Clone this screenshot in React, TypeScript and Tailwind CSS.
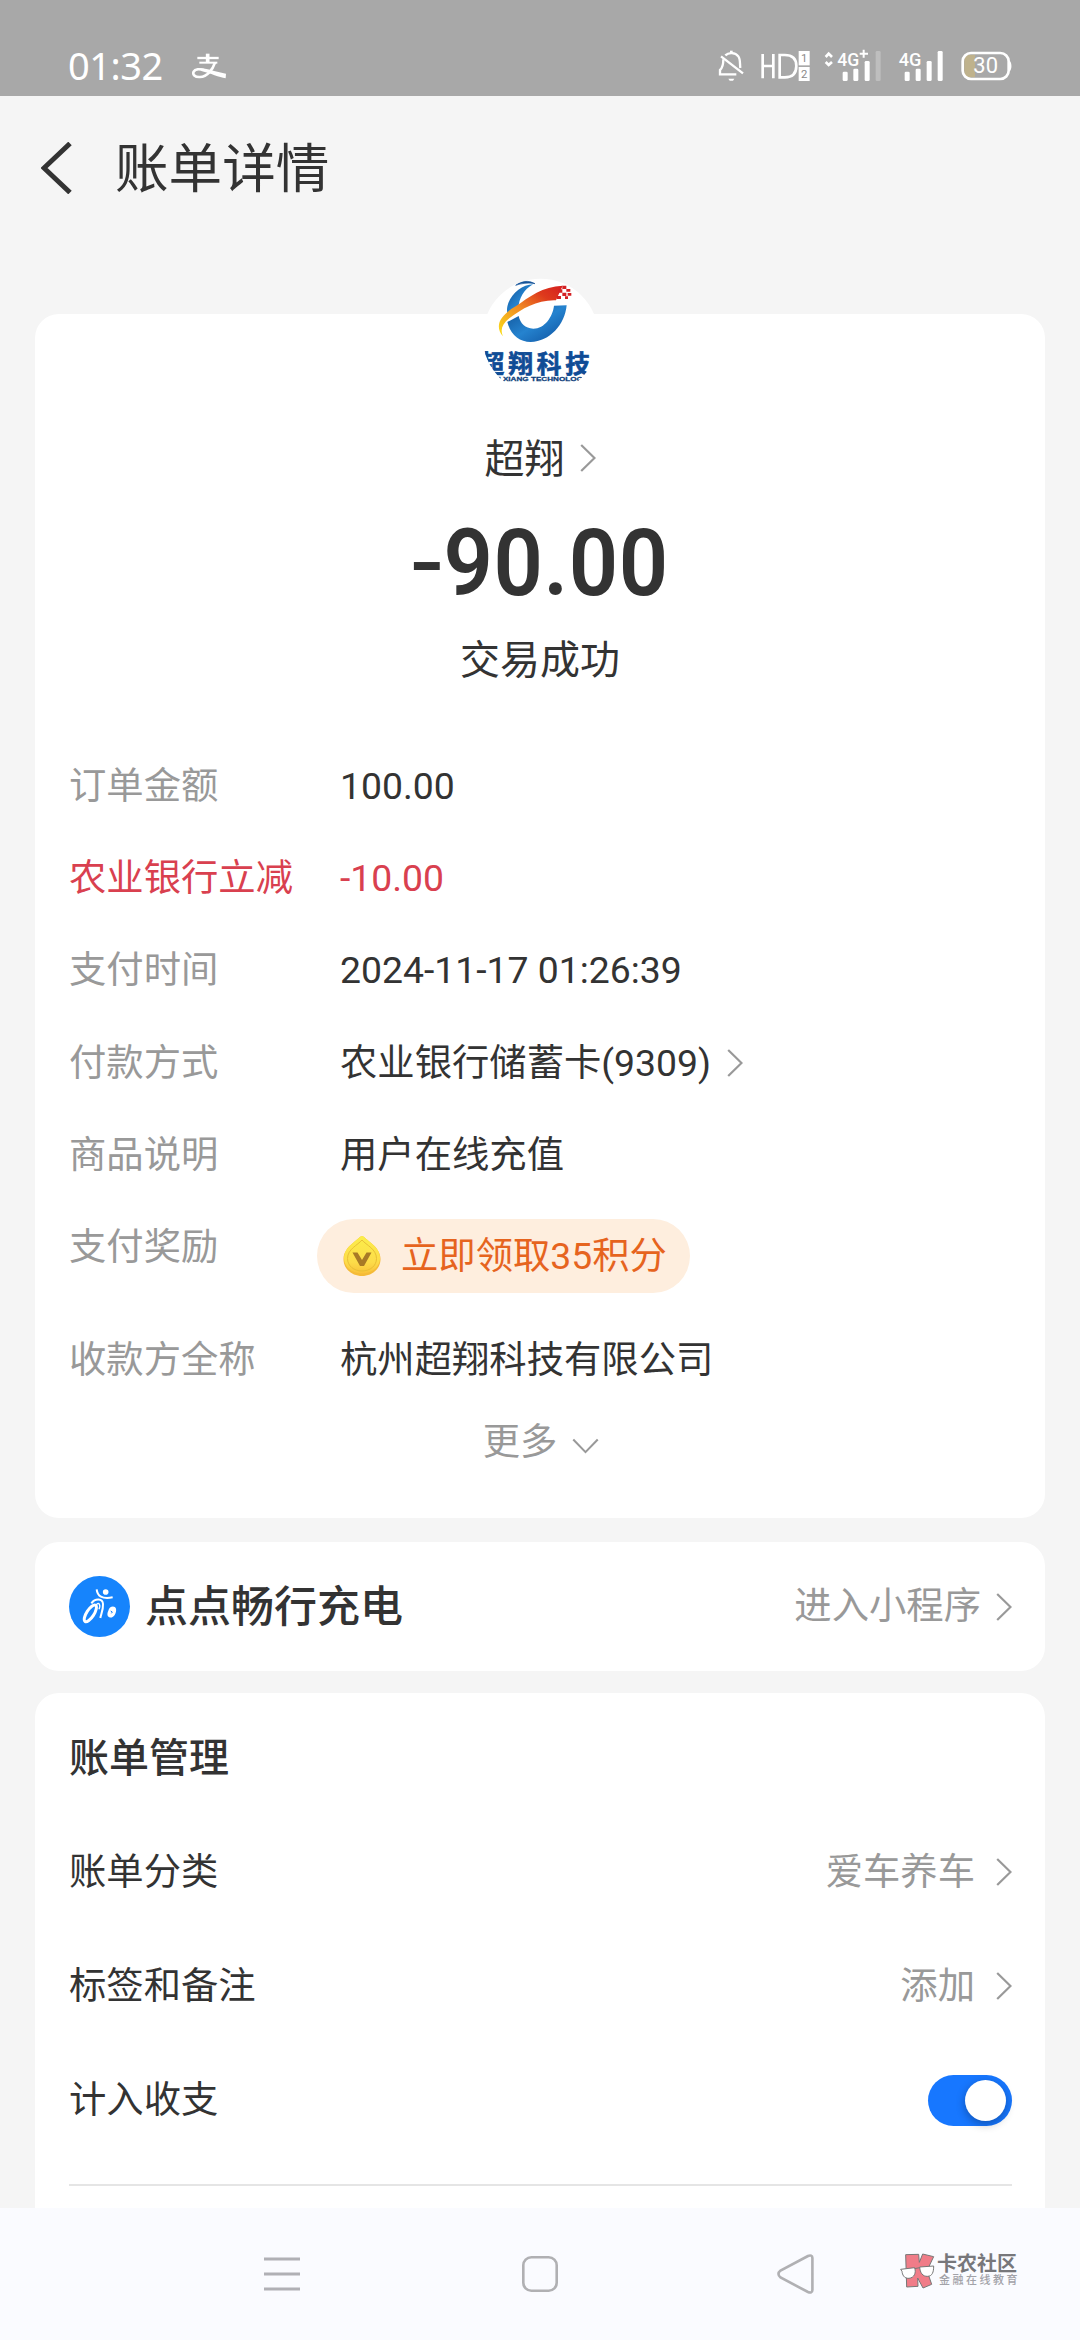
import type { ReactNode } from "react";

const details = [
  { label: "订单金额", value: "100.00" },
  { label: "农业银行立减", value: "-10.00", highlight: true },
  { label: "支付时间", value: "2024-11-17 01:26:39" },
  { label: "付款方式", value: "农业银行储蓄卡(9309)", link: true },
  { label: "商品说明", value: "用户在线充值" },
];

function ChevronRight({ className = "" }: { className?: string }) {
  return (
    <svg className={`shrink-0 ${className}`} width="16" height="28" viewBox="0 0 16 28" fill="none">
      <path d="M1.2 1 L14.5 14 L1.2 27" stroke="#999999" strokeWidth="2.2" />
    </svg>
  );
}

function StatusBar() {
  return (
    <div className="flex h-24 shrink-0 items-start bg-[#a8a8a8] pl-[68px] text-white">
      <span className="mt-[40px] w-[124px] font-['Noto_Sans'] text-[38px] leading-[50px] tracking-[-0.5px]">01:32</span>
      {/* Alipay notification */}
      <svg className="mt-[52px]" width="35" height="28" viewBox="574 96 105 84" fill="none" stroke="#fff">
        <path d="M590 114 H654" strokeWidth="7" />
        <path d="M621 101 V129" strokeWidth="11" />
        <path d="M596 128 H650" strokeWidth="6" />
        <path d="M643 128 C636 149 620 170 598 171 C582 172 575 163 579 155 C583 147 597 146 610 150" strokeWidth="8" />
        <path d="M598 145 C625 146 650 158 676 161 L675 175 C655 172 630 160 602 153 Z" fill="#fff" stroke="none" />
      </svg>

      <div className="ml-[491px] mt-[45px] flex">
        {/* Muted bell */}
        <svg width="27" height="37" viewBox="82 45 81 111" fill="none" stroke="#fff" strokeWidth="7">
          <path d="M122 62 V70" strokeWidth="8" />
          <path d="M104 76 C114 66 134 67 143 79 C150 88 147 103 149 114" />
          <path d="M98 88 C98 103 97 113 88 120 V133 H137" />
          <path d="M91 79 L157 130" />
          <path d="M113 146 H131 L127 152 H117 Z" fill="#fff" stroke="none" />
        </svg>
        {/* HD on both sims */}
        <svg className="ml-[15px]" width="51" height="37" viewBox="208 45 153 111" fill="none">
          <path d="M216 72 V145 M248 72 V145 M216 108 H248 M267 75 V142 H282 C310 142 317 126 317 108 C317 90 310 75 282 75 Z" stroke="#fff" strokeWidth="8" />
          <rect x="324" y="63" width="33" height="43" fill="#fff" />
          <rect x="324" y="111" width="33" height="42" fill="#fff" />
          <text x="340.5" y="97" textAnchor="middle" fontFamily="Roboto" fontSize="34" fill="#8a8a8a">1</text>
          <text x="340.5" y="145" textAnchor="middle" fontFamily="Roboto" fontSize="34" fill="#8a8a8a">2</text>
        </svg>
        <svg className="ml-[13px]" width="59" height="37" viewBox="400 45 177 111" fill="none">
          <path d="M405 81 L414 71 L424 81 M405 96 L414 105 L424 96" stroke="#fff" strokeWidth="8" />
          <text x="440" y="107" fontFamily="Roboto" fontSize="57" fontWeight="500" fill="#fff" textLength="66" lengthAdjust="spacingAndGlyphs">4G</text>
          <path d="M507 71 H532 M519 59 V83" stroke="#fff" strokeWidth="6" />
          <g fill="#fff">
            <rect x="456" y="125" width="15" height="28" rx="4" />
            <rect x="488" y="116" width="15" height="37" rx="4" />
            <rect x="522" y="93" width="15" height="60" rx="4" />
            <rect x="555" y="63" width="15" height="90" rx="4" opacity="0.25" />
          </g>
        </svg>
        <svg className="ml-[15px]" width="46" height="37" viewBox="622 45 138 111">
          <text x="624" y="107" fontFamily="Roboto" fontSize="57" fontWeight="500" fill="#fff" textLength="68" lengthAdjust="spacingAndGlyphs">4G</text>
          <g fill="#fff">
            <rect x="642" y="125" width="15" height="28" rx="4" />
            <rect x="675" y="116" width="15" height="37" rx="4" />
            <rect x="708" y="93" width="15" height="60" rx="4" />
            <rect x="741" y="63" width="15" height="90" rx="4" />
          </g>
        </svg>
        <svg className="ml-[17px]" width="52" height="37" viewBox="811 45 156 111" fill="none">
          <path d="M839 74 H853 V142 H839 C825 142 821 135 821 122 V94 C821 81 825 74 839 74 Z" fill="#bfb28c" />
          <rect x="816" y="69" width="138" height="78" rx="25" stroke="#fff" strokeWidth="8" />
          <path d="M957 92 C964 99 964 117 957 124 Z" fill="#fff" />
          <text x="885" y="130" textAnchor="middle" fontFamily="Roboto" fontSize="66" fill="#fff" textLength="74" lengthAdjust="spacingAndGlyphs">30</text>
        </svg>
      </div>
    </div>
  );
}

function MerchantLogo() {
  return (
    <svg className="relative mx-auto -mt-[38px]" width="120" height="120" viewBox="59 48 360 360">
      <defs>
        <clipPath id="avatar">
          <circle cx="241" cy="230" r="174" />
        </clipPath>
        <linearGradient id="swoosh" x1="0" y1="1" x2="1" y2="0">
          <stop offset="0" stopColor="#fbe21a" />
          <stop offset="0.45" stopColor="#f08a24" />
          <stop offset="0.75" stopColor="#de3a1c" />
          <stop offset="1" stopColor="#d51f1f" />
        </linearGradient>
        <linearGradient id="ring" x1="0" y1="0" x2="1" y2="1">
          <stop offset="0" stopColor="#0f4f93" />
          <stop offset="0.5" stopColor="#2583cf" />
          <stop offset="1" stopColor="#0d4f9c" />
        </linearGradient>
      </defs>
      <circle cx="241" cy="230" r="174" fill="#fff" />
      <g clipPath="url(#avatar)">
        <path d="M166 76 C182 62 203 60 224 71 C204 67 183 70 166 76 Z" fill="#16559a" stroke="#16559a" strokeWidth="2" />
        <path d="M218 73 C188 73 156 98 144 129 C139 143 139 155 142 166 L174 145 C176 115 190 89 218 73 Z" fill="url(#ring)" />
        <path d="M141 186 C151 226 178 246 211 246 C268 245 314 194 319 136 L281 137 C277 170 253 206 219 206 C194 205 180 190 175 168 Z" fill="url(#ring)" />
        <path d="M128 229 C100 196 122 165 166 139 C206 111 247 79 307 77 L287 121 C232 119 186 145 147 175 C125 193 119 209 128 229 Z" fill="url(#swoosh)" />
        <g fill="#d42124">
          <path d="M306 77 h12 v10 h-12 z M294 88 h12 v10 h-12 z M318 87 h12 v8 h-12 z M306 98 h12 v10 h-12 z M322 99 h11 v8 h-11 z M290 108 h12 v9 h-12 z M314 109 h9 v8 h-9 z" />
        </g>
        <text x="58" y="339" fontFamily="'Noto Sans CJK SC'" fontWeight="700" fontSize="74" fill="#0f4c96" stroke="#0f4c96" strokeWidth="2" textLength="331">超翔科技</text>
        <text x="98" y="364" fontFamily="'Liberation Sans'" fontWeight="700" fontSize="18" fill="#0f3f7c" stroke="#0f3f7c" strokeWidth="0.8" textLength="286" lengthAdjust="spacingAndGlyphs">YI XIANG TECHNOLOGY</text>
      </g>
    </svg>
  );
}

function RewardCoin() {
  return (
    <svg width="38" height="42" viewBox="0 0 38 42">
      <defs>
        <linearGradient id="coin" x1="0" y1="0" x2="0" y2="1">
          <stop offset="0" stopColor="#fbee4a" />
          <stop offset="0.7" stopColor="#fddc49" />
          <stop offset="1" stopColor="#f9c23a" />
        </linearGradient>
      </defs>
      <path d="M19 1 C20.5 1 22.5 3.5 27.5 7.5 C34 12.5 37.5 18 37.5 24 C37.5 34 29 41 19 41 C9 41 .5 34 .5 24 C.5 18 4 12.5 10.5 7.5 C15.5 3.5 17.5 1 19 1 Z" fill="#f5bb38" />
      <path d="M19 1 C20.5 1 22.5 3.5 27.5 7.5 C34 12.5 37 17.5 37 23 C37 32 29 38.5 19 38.5 C9 38.5 1 32 1 23 C1 17.5 4 12.5 10.5 7.5 C15.5 3.5 17.5 1 19 1 Z" fill="url(#coin)" />
      <path d="M19 5 C23 10 33.5 14 33.5 23.5 C33.5 31 27 36 19 36 C11 36 4.5 31 4.5 23.5 C4.5 14 15 10 19 5 Z" fill="none" stroke="#e9bf35" strokeWidth="1" />
      <path d="M9.5 17.5 H14.5 L19 25 L23.5 17.5 H28.5 L21 31 H17 Z" fill="#a87a26" />
    </svg>
  );
}

function MiniProgramIcon() {
  return (
    <svg width="61" height="61" viewBox="117 138 183 183">
      <circle cx="208.5" cy="229.5" r="91.5" fill="#1684fc" />
      <g fill="none" stroke="#fff">
        <path d="M200 178 C202 198 216 208 248 202" strokeWidth="6" />
        <path d="M184 220 C196 204 218 205 219 222 C220 240 213 252 211 264" strokeWidth="6" />
        <path d="M196 228 C206 212 213 224 207 238" strokeWidth="4" />
        <ellipse cx="181" cy="250" rx="11" ry="29" transform="rotate(33 181 250)" strokeWidth="9" />
        <path d="M235 242 C237 228 255 225 258 236 C261 249 249 267 238 262 C231 258 231 250 235 242 Z" fill="#fff" stroke="none" />
        <path d="M242 243 L247 246 L244 250" stroke="#1684fc" strokeWidth="3" />
      </g>
      <circle cx="227" cy="186" r="8.5" fill="#fff" />
    </svg>
  );
}

function ManageRow({ label, children }: { label: string; children: ReactNode }) {
  return (
    <div className="flex h-[114px] items-center justify-between">
      <span className="pt-[2px]">{label}</span>
      <div className="flex items-center text-[#999999]">{children}</div>
    </div>
  );
}

function NavBar() {
  return (
    <div className="flex h-[132px] shrink-0 items-center bg-[#fafbff] pl-[264px]">
      <svg width="36" height="36" viewBox="0 0 36 36" stroke="#b0b0b5" strokeWidth="3">
        <path d="M0 3 H36 M0 18 H36 M0 33 H36" />
      </svg>
      <svg className="ml-[222px]" width="36" height="36" viewBox="0 0 36 36" fill="none" stroke="#b0b0b3" strokeWidth="2.6">
        <rect x="1.3" y="1.3" width="33.4" height="33.4" rx="8" />
      </svg>
      <svg className="ml-[219px]" width="37" height="40" viewBox="0 0 37 40" fill="none" stroke="#b0b0b3" strokeWidth="2.6">
        <path d="M31 2 L3.5 16.5 C.8 18.5 .8 21.5 3.5 23.5 L31 38 C33.5 39.2 35.4 38.3 35.4 36 V4 C35.4 1.7 33.5 .8 31 2 Z" />
      </svg>
      <div className="ml-[86px] mt-[-7px] flex h-[36px] items-start">
        <svg width="35" height="36" viewBox="59 637 105 108" stroke="#777" strokeWidth="3">
          <path d="M76 642 L115 641 L117 665 L127 640 L160 648 L140 690 L154 731 L128 742 L112 712 L113 737 L79 739 Z" fill="#f07c88" />
          <path d="M61 686 L103 681 C108 697 102 711 86 713 C71 714 66 702 65 692 Z" fill="#fff" />
          <path d="M118 679 L160 676 C160 695 156 706 142 707 C127 708 119 696 118 679 Z" fill="#fff" />
          <path d="M103 684 L118 681" fill="none" />
        </svg>
        <div className="ml-[2px] flex flex-col whitespace-nowrap">
          <span className="text-[20px] font-bold leading-[22px] text-[#77777b]">卡农社区</span>
          <span className="ml-[2px] text-[11px] font-medium leading-[12px] tracking-[2.5px] text-[#a2a2a8]">金融在线教育</span>
        </div>
      </div>
    </div>
  );
}

export default function App() {
  return (
    <div className="flex h-[2340px] w-[1080px] flex-col overflow-hidden bg-[#f5f5f5] font-[Roboto,'Noto_Sans_CJK_SC',sans-serif] text-[37.33px] text-[#333333]">
      <StatusBar />

      <header className="flex h-[144px] shrink-0 items-center pl-[41px]">
        <svg width="31" height="52" viewBox="0 0 31 52" fill="none" stroke="#333" strokeWidth="5">
          <path d="M29 1.5 L3 26 L29 50.5" />
        </svg>
        <h1 className="ml-[43px] pt-[3px] text-[53.6px] leading-[72px]">账单详情</h1>
      </header>

      {/* Bill summary and details */}
      <section className="mx-[35px] mt-[74px] flex h-[1204px] shrink-0 flex-col rounded-[24px] bg-white">
        <MerchantLogo />
        <div className="mt-[34px] flex h-14 items-center justify-center">
          <span className="pt-[3px] text-[40px]">超翔</span>
          <ChevronRight className="ml-[15px]" />
        </div>
        <div className="mt-[25px] h-[106px] scale-x-[0.94] text-center text-[92px] font-semibold leading-[106px] tracking-[0.6px]">
          <span className="inline-block origin-center scale-x-[1.12] scale-y-[0.84]">-</span>
          <span>90.00</span>
        </div>
        <div className="mt-[20px] h-12 text-center text-[40px] leading-[48px]">交易成功</div>

        <div className="mt-[54px] px-[34px]">
          {details.map((item) => (
            <div
              key={item.label}
              className={`flex h-[92.3px] items-center ${item.highlight ? "text-[#d9404f]" : ""}`}
            >
              <span className={`w-[271px] pt-[3px] ${item.highlight ? "" : "text-[#999999]"}`}>{item.label}</span>
              <span className="pt-[3px]">{item.value}</span>
              {item.link && <ChevronRight className="ml-[16px] mt-[2px]" />}
            </div>
          ))}
          <div className="flex h-[113px] items-start">
            <span className="w-[248px] leading-[94px] text-[#999999]">支付奖励</span>
            <div className="mt-[19px] flex h-[74px] w-[373px] items-center rounded-full bg-[#feeede] pl-[26px] text-[#e6641e]">
              <RewardCoin />
              <span className="ml-[20px] pt-[2px]">立即领取35积分</span>
            </div>
          </div>
          <div className="flex h-[93px] items-center pt-[3px]">
            <span className="w-[271px] text-[#999999]">收款方全称</span>
            <span>杭州超翔科技有限公司</span>
          </div>
        </div>
        <div className="mt-[9px] flex h-[54px] items-center justify-center pl-[2px] text-[#999999]">
          <span>更多</span>
          <svg className="ml-[15px] mt-[8px]" width="27" height="16" viewBox="0 0 28 17" fill="none">
            <path d="M1 1.5 L14 15 L27 1.5" stroke="#999999" strokeWidth="2.2" />
          </svg>
        </div>
      </section>

      {/* Mini program entry */}
      <section className="mx-[35px] mt-[24px] flex h-[129px] shrink-0 items-center rounded-[24px] bg-white pl-[34px] pr-[33px]">
        <MiniProgramIcon />
        <span className="ml-[15px] pt-[1px] text-[43px] font-medium">点点畅行充电</span>
        <span className="ml-auto pt-[1px] text-[#999999]">进入小程序</span>
        <ChevronRight className="ml-[15px]" />
      </section>

      {/* Bill management */}
      <section className="mx-[35px] mt-[22px] flex min-h-0 flex-1 flex-col rounded-t-[24px] bg-white pl-[34px] pr-[33px] pt-[38px]">
        <h2 className="h-[56px] text-[40px] font-medium leading-[56px]">账单管理</h2>
        <div className="mt-[28px]">
          <ManageRow label="账单分类">
            <span className="pt-[2px]">爱车养车</span>
            <ChevronRight className="ml-[21px]" />
          </ManageRow>
          <ManageRow label="标签和备注">
            <span className="pt-[2px]">添加</span>
            <ChevronRight className="ml-[21px]" />
          </ManageRow>
          <ManageRow label="计入收支">
            <div className="flex h-[51px] w-[84px] items-center justify-end rounded-full bg-[#1777ff] pr-[6px]">
              <div className="size-[41px] rounded-full bg-white shadow-[0_3px_10px_rgba(0,0,0,0.3)]" />
            </div>
          </ManageRow>
        </div>
        <div className="mt-[27px] h-[2px] shrink-0 bg-[#e5e5e5]" />
      </section>

      <NavBar />
    </div>
  );
}
